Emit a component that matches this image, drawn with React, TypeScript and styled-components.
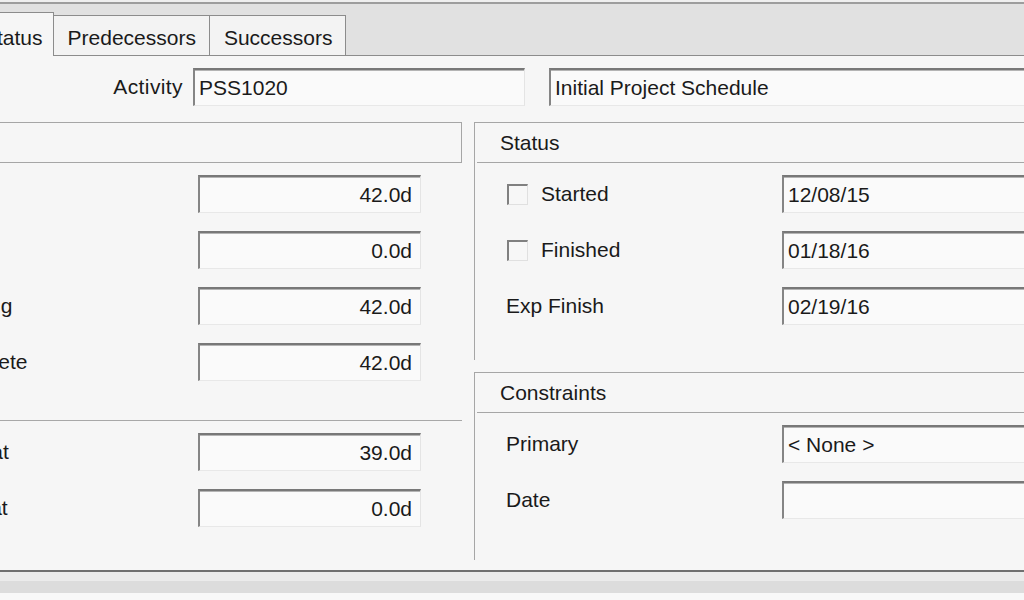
import styled, { createGlobalStyle } from "styled-components";

const GlobalStyle = createGlobalStyle`
  html, body {
    margin: 0;
    padding: 0;
    width: 1024px;
    height: 600px;
    overflow: hidden;
    background: #f6f6f6;
  }
  body {
    font-family: "Liberation Sans", Arial, sans-serif;
    font-size: 21px;
    color: #1a1a1a;
  }
`;

const durations = [
  { label: "Original", value: "42.0d" },
  { label: "Actual", value: "0.0d" },
  { label: "Remaining", value: "42.0d" },
  { label: "At Complete", value: "42.0d" },
];

const floats = [
  { label: "Total Float", value: "39.0d" },
  { label: "Free Float", value: "0.0d" },
];

const statusRows = [
  { label: "Started", value: "12/08/15", check: true },
  { label: "Finished", value: "01/18/16", check: true },
  { label: "Exp Finish", value: "02/19/16", check: false },
];

const constraintRows = [
  { label: "Primary", value: "< None >" },
  { label: "Date", value: "" },
];

const App = () => {
  return (
    <Screen>
      <GlobalStyle />
      <Dialog>
        <TopEdge />
        <TabStrip>
          <Tab $active>Status</Tab>
          <Tab>Predecessors</Tab>
          <Tab>Successors</Tab>
        </TabStrip>

        <Body>
          <ActivityRow>
            <ActivityLabel>Activity</ActivityLabel>
            <IdBox>PSS1020</IdBox>
            <NameBox>Initial Project Schedule</NameBox>
          </ActivityRow>

          <Groups>
            <LeftColumn>
              <BoxedHeader>Duration</BoxedHeader>
              <FieldGrid $valueWidth={223} $padLeft={14} $padRight={41}>
                {durations.map((row) => (
                  <Row key={row.label}>
                    <Label>{row.label}</Label>
                    <TextBox $align="right">{row.value}</TextBox>
                  </Row>
                ))}
              </FieldGrid>
              <Divider />
              <FieldGrid $valueWidth={223} $padLeft={14} $padRight={41}>
                {floats.map((row) => (
                  <Row key={row.label}>
                    <Label>{row.label}</Label>
                    <TextBox $align="right">{row.value}</TextBox>
                  </Row>
                ))}
              </FieldGrid>
            </LeftColumn>

            <RightColumn>
              <Section $height={238}>
                <SectionHeader>Status</SectionHeader>
                <FieldGrid $valueWidth={258} $padLeft={31} $padRight={19}>
                  {statusRows.map((row) => (
                    <Row key={row.label}>
                      <Label>
                        {row.check && <CheckBox />}
                        {row.label}
                      </Label>
                      <TextBox>{row.value}</TextBox>
                    </Row>
                  ))}
                </FieldGrid>
              </Section>

              <Section $height={188}>
                <SectionHeader>Constraints</SectionHeader>
                <FieldGrid $valueWidth={258} $padLeft={31} $padRight={19}>
                  {constraintRows.map((row) => (
                    <Row key={row.label}>
                      <Label>{row.label}</Label>
                      <TextBox>{row.value}</TextBox>
                    </Row>
                  ))}
                </FieldGrid>
              </Section>
            </RightColumn>
          </Groups>
        </Body>

        <Footer />
      </Dialog>
    </Screen>
  );
};

export default App;

const Screen = styled.div`
  width: 1024px;
  height: 600px;
  overflow: hidden;
`;

// the shot is cropped: the dialog starts left of the visible area
const Dialog = styled.div`
  margin-left: -110px;
  width: 1180px;
  height: 600px;
  display: flex;
  flex-direction: column;
  background: #f6f6f6;
`;

const TopEdge = styled.div`
  height: 2px;
  background: #efefef;
`;

const TabStrip = styled.div`
  height: 51px;
  display: flex;
  align-items: flex-end;
  padding-left: 78px;
  background: #e1e1e1;
  border-top: 2px solid #9d9d9d;
  border-bottom: 1px solid #8c8c8c;
`;

const Tab = styled.div<{ $active?: boolean }>`
  box-sizing: border-box;
  display: flex;
  align-items: center;
  height: ${(p) => (p.$active ? 44 : 40)}px;
  margin-bottom: ${(p) => (p.$active ? -1 : 0)}px;
  padding: ${(p) => (p.$active ? 7 : 4)}px ${(p) => (p.$active ? 10 : 13)}px 0 14px;
  background: ${(p) => (p.$active ? "#f6f6f6" : "#f3f3f3")};
  border: 1px solid #8c8c8c;
  border-bottom: none;
  white-space: nowrap;

  & + & {
    margin-left: -1px;
  }
`;

const Body = styled.div`
  padding-top: 12px;
  display: flex;
  flex-direction: column;
`;

const ActivityRow = styled.div`
  display: flex;
  align-items: center;
  height: 38px;
`;

const ActivityLabel = styled.span`
  width: 293px;
  margin-right: 10px;
  text-align: right;
  letter-spacing: 0.4px;
`;

const TextBox = styled.div<{ $align?: "left" | "right" }>`
  box-sizing: border-box;
  height: 38px;
  display: flex;
  align-items: center;
  justify-content: ${(p) => (p.$align === "right" ? "flex-end" : "flex-start")};
  padding: 0 8px 0 4px;
  background: #fafafa;
  border-top: 2px solid #787878;
  border-left: 2px solid #858585;
  border-right: 1px solid #e4e4e4;
  border-bottom: 1px solid #e8e8e8;
  box-shadow: inset 0 1px 0 #b4b4b4;
  white-space: nowrap;
  overflow: hidden;
`;

const IdBox = styled(TextBox)`
  width: 332px;
  margin-right: 24px;
`;

const NameBox = styled(TextBox)`
  width: 480px;
`;

const Groups = styled.div`
  display: grid;
  grid-template-columns: 564px 586px;
  column-gap: 12px;
  margin: 16px 0 0 8px;
`;

const LeftColumn = styled.div`
  display: flex;
  flex-direction: column;
`;

const RightColumn = styled.div`
  display: flex;
  flex-direction: column;
  gap: 12px;
`;

const BoxedHeader = styled.div`
  box-sizing: border-box;
  height: 41px;
  display: flex;
  align-items: center;
  padding-left: 8px;
  border: 1px solid #a6a6a6;
`;

const Section = styled.div<{ $height: number }>`
  box-sizing: border-box;
  height: ${(p) => p.$height}px;
  border-top: 1px solid #a6a6a6;
  border-left: 1px solid #a6a6a6;
  border-right: 1px solid #a6a6a6;
`;

const SectionHeader = styled.div`
  box-sizing: border-box;
  height: 40px;
  display: flex;
  align-items: center;
  padding-left: 23px;
  margin-left: 2px;
  border-bottom: 1px solid #a6a6a6;
`;

const FieldGrid = styled.div<{
  $valueWidth: number;
  $padLeft: number;
  $padRight: number;
}>`
  display: grid;
  grid-template-columns: 1fr ${(p) => p.$valueWidth}px;
  grid-auto-rows: 38px;
  row-gap: 18px;
  padding: 12px ${(p) => p.$padRight}px 0 ${(p) => p.$padLeft}px;
`;

const Row = styled.div`
  display: contents;
`;

const Label = styled.span`
  display: flex;
  align-items: center;
  gap: 13px;
  white-space: nowrap;
`;

const CheckBox = styled.span`
  box-sizing: border-box;
  width: 21px;
  height: 21px;
  margin-left: 1px;
  background: #f7f7f7;
  border-top: 2px solid #808080;
  border-left: 2px solid #808080;
  border-right: 1px solid #e0e0e0;
  border-bottom: 1px solid #e0e0e0;
`;

const Divider = styled.div`
  height: 1px;
  margin-top: 39px;
  background: #a8a8a8;
`;

const Footer = styled.div`
  margin-top: auto;
  box-sizing: border-box;
  height: 30px;
  border-top: 2px solid #707070;
  background: linear-gradient(
    #ebebeb 0 9px,
    #dcdcdc 9px 21px,
    #f8f8f8 21px
  );
`;
